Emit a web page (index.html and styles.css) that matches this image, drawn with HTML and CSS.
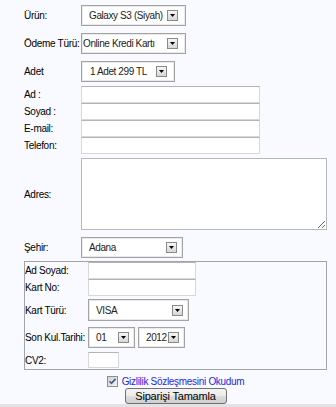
FILE: index.html
```html
<!DOCTYPE html>
<html lang="tr">
<head>
    <meta charset="UTF-8">
    <meta name="viewport" content="width=device-width, initial-scale=1.0">
    <title>Sipariş Formu</title>
    <link rel="stylesheet" href="styles.css">
</head>
<body>
    <form class="order-form" id="orderForm">
        <!-- ürün seçimi -->
        <div class="field-row row-select">
            <label for="product">Ürün:</label>
            <span class="pick pick-product">
                <select id="product">
                    <option>Galaxy S3 (Siyah)</option>
                    <option>Galaxy S3 (Beyaz)</option>
                </select>
                <span class="drop"><svg width="5" height="3" viewBox="0 0 5 3"><path d="M0 0h5L2.5 3z" fill="#000"/></svg></span>
            </span>
        </div>
        <div class="field-row row-select">
            <label for="payment">Ödeme Türü:</label>
            <span class="pick pick-product pick-tight">
                <select id="payment">
                    <option>Online Kredi Kartı</option>
                    <option>Havale / EFT</option>
                </select>
                <span class="drop"><svg width="5" height="3" viewBox="0 0 5 3"><path d="M0 0h5L2.5 3z" fill="#000"/></svg></span>
            </span>
        </div>
        <div class="field-row row-select">
            <label for="amount">Adet</label>
            <span class="pick pick-amount">
                <select id="amount">
                    <option>1 Adet 299 TL</option>
                    <option>2 Adet 598 TL</option>
                </select>
                <span class="drop"><svg width="5" height="3" viewBox="0 0 5 3"><path d="M0 0h5L2.5 3z" fill="#000"/></svg></span>
            </span>
        </div>

        <!-- müşteri bilgileri -->
        <div class="text-rows">
            <div class="field-row row-text">
                <label for="firstName">Ad :</label>
                <input type="text" id="firstName" class="text-input">
            </div>
            <div class="field-row row-text">
                <label for="lastName">Soyad :</label>
                <input type="text" id="lastName" class="text-input">
            </div>
            <div class="field-row row-text">
                <label for="email">E-mail:</label>
                <input type="text" id="email" class="text-input">
            </div>
            <div class="field-row row-text">
                <label for="phone">Telefon:</label>
                <input type="text" id="phone" class="text-input">
            </div>
        </div>
        <div class="field-row row-area">
            <label for="address">Adres:</label>
            <textarea id="address" class="address-input"></textarea>
        </div>
        <div class="field-row row-select row-city">
            <label for="city">Şehir:</label>
            <span class="pick pick-city">
                <select id="city">
                    <option>Adana</option>
                    <option>Ankara</option>
                    <option>İstanbul</option>
                    <option>İzmir</option>
                </select>
                <span class="drop"><svg width="5" height="3" viewBox="0 0 5 3"><path d="M0 0h5L2.5 3z" fill="#000"/></svg></span>
            </span>
        </div>

        <!-- kart bilgileri -->
        <div class="card-box">
            <div class="card-row row-text">
                <label for="cardName">Ad Soyad:</label>
                <input type="text" id="cardName" class="card-input">
            </div>
            <div class="card-row row-text">
                <label for="cardNo">Kart No:</label>
                <input type="text" id="cardNo" class="card-input">
            </div>
            <div class="card-row row-type">
                <label for="cardType">Kart Türü:</label>
                <span class="pick pick-type">
                    <select id="cardType">
                        <option>VISA</option>
                        <option>MasterCard</option>
                    </select>
                    <span class="drop"><svg width="5" height="3" viewBox="0 0 5 3"><path d="M0 0h5L2.5 3z" fill="#000"/></svg></span>
                </span>
            </div>
            <div class="card-row row-date">
                <label for="expMonth">Son Kul.Tarihi:</label>
                <span class="pick pick-date">
                    <select id="expMonth">
                        <option>01</option><option>02</option><option>03</option><option>04</option>
                        <option>05</option><option>06</option><option>07</option><option>08</option>
                        <option>09</option><option>10</option><option>11</option><option>12</option>
                    </select>
                    <span class="drop"><svg width="5" height="3" viewBox="0 0 5 3"><path d="M0 0h5L2.5 3z" fill="#000"/></svg></span>
                </span>
                <span class="pick pick-date pick-year">
                    <select id="expYear">
                        <option>2012</option><option>2013</option><option>2014</option>
                        <option>2015</option><option>2016</option><option>2017</option>
                    </select>
                    <span class="drop"><svg width="5" height="3" viewBox="0 0 5 3"><path d="M0 0h5L2.5 3z" fill="#000"/></svg></span>
                </span>
            </div>
            <div class="card-row row-cv2">
                <label for="cv2">CV2:</label>
                <input type="text" id="cv2" class="cv2-input">
            </div>
        </div>

        <div class="agree-row">
            <label class="agree-label">
                <input type="checkbox" id="agree" class="agree-check" checked>
                <svg class="check-icon" width="11" height="11" viewBox="0 0 11 11">
                    <defs>
                        <linearGradient id="boxFill" x1="0" y1="0" x2="1" y2="1">
                            <stop offset="0" stop-color="#cfcfcf"/>
                            <stop offset="1" stop-color="#f6f6f6"/>
                        </linearGradient>
                    </defs>
                    <rect x="0.5" y="0.5" width="10" height="10" fill="url(#boxFill)" stroke="#8e8f8f"/>
                    <path d="M2.5 5.2l2 2.1 4-4.4" fill="none" stroke="#3f5a8c" stroke-width="1.6"/>
                </svg>
                <span>Gizlilik Sözleşmesini Okudum</span>
            </label>
        </div>
        <div class="submit-row">
            <button type="submit" class="submit-btn">Siparişi Tamamla</button>
        </div>
    </form>
    <div class="page-end"></div>
</body>
</html>
```

FILE: styles.css
```css
body {
    margin: 0;
    padding: 0;
    background-color: #f9faff;
    font-family: 'Liberation Sans', Arial, sans-serif;
    font-size: 10px;
    letter-spacing: -0.3px;
    color: #000;
}

.order-form {
    width: 303px;
    margin-left: 24px;
    padding-top: 1px;
}

.field-row,
.card-row {
    display: flex;
    align-items: center;
}

.field-row > label {
    width: 57px;
    flex: none;
}

.card-row > label {
    width: 63px;
    flex: none;
    white-space: nowrap;
}

.row-select {
    height: 28px;
}

.row-text {
    height: 17px;
}

.text-rows {
    margin-top: 1px;
}

.row-area {
    margin-top: 4px;
}

.row-city {
    margin-top: 3px;
}

/* selectbox */
.pick {
    display: inline-flex;
    align-items: center;
    height: 21px;
    box-sizing: border-box;
    border: 1px solid #a3a3a3;
    background-color: #fff;
    box-shadow: inset 0 0 0 1px #e9e9e9;
}

.pick select {
    appearance: none;
    -webkit-appearance: none;
    flex: 1;
    min-width: 0;
    height: 100%;
    padding: 0 0 0 7px;
    border: none;
    background: transparent;
    font-family: inherit;
    font-size: 10px;
    letter-spacing: -0.4px;
    color: #222;
    outline: none;
}

.drop {
    flex: none;
    display: flex;
    align-items: center;
    justify-content: center;
    width: 11px;
    height: 11px;
    margin-right: 5px;
    box-sizing: border-box;
    border: 1px solid #8a8a8a;
    background: linear-gradient(#f6f6f6, #d6d6d6);
}

.pick-product {
    width: 105px;
}

.pick-product .drop,
.pick-amount .drop {
    margin-right: 7px;
}

.pick-tight select {
    padding-left: 1px;
}

.pick-amount {
    width: 94px;
}

.pick-amount select {
    padding-left: 8px;
}

.pick-city {
    width: 102px;
}

.pick-type {
    width: 101px;
    height: 22px;
}

.pick-date {
    width: 47px;
}

.pick-year {
    margin-left: 3px;
}

/* text fields */
.text-input {
    width: 179px;
    height: 17px;
    box-sizing: border-box;
    margin: 0;
    padding: 0 2px;
    border: 1px solid #d8d8d8;
    border-top-color: #b4b4b4;
    background-color: #fff;
    font-family: inherit;
    font-size: 10px;
}

.address-input {
    width: 246px;
    height: 72px;
    box-sizing: border-box;
    margin: 0;
    border: 1px solid #b8b8b8;
    background-color: #fff;
    font-family: inherit;
    font-size: 10px;
}

/* card box */
.card-box {
    box-sizing: border-box;
    width: 303px;
    padding: 0 0 1px 0;
    border: 1px solid #a4a4a4;
}

.card-input {
    width: 108px;
    height: 17px;
    box-sizing: border-box;
    margin: 0;
    border: 1px solid #d8d8d8;
    border-top-color: #b4b4b4;
    background-color: #fff;
}

.row-type {
    margin-top: 3px;
}

.row-date {
    margin-top: 6px;
}

.row-cv2 {
    margin-top: 4px;
    height: 16px;
}

.cv2-input {
    width: 31px;
    height: 16px;
    box-sizing: border-box;
    margin: 0;
    border: 1px solid #d8d8d8;
    border-top-color: #b4b4b4;
    background-color: #fff;
}

/* sözleşme + buton */
.agree-row {
    display: flex;
    justify-content: center;
    margin-top: 4px;
    height: 14px;
}

.agree-label {
    display: flex;
    align-items: center;
    gap: 4px;
    color: #1f1fe6;
    cursor: pointer;
}

.agree-check {
    display: none;
}

.submit-row {
    display: flex;
    justify-content: center;
}

.submit-btn {
    width: 102px;
    height: 16px;
    padding: 0;
    border: 1px solid #707070;
    border-radius: 3px;
    background: linear-gradient(#f3f3f3 0%, #ebebeb 50%, #dddddd 51%, #cfcfcf 100%);
    font-family: inherit;
    font-size: 11px;
    letter-spacing: -0.2px;
    line-height: 14px;
    color: #000;
    cursor: pointer;
}

.page-end {
    height: 3px;
    background-color: #e3e3e3;
}
```
